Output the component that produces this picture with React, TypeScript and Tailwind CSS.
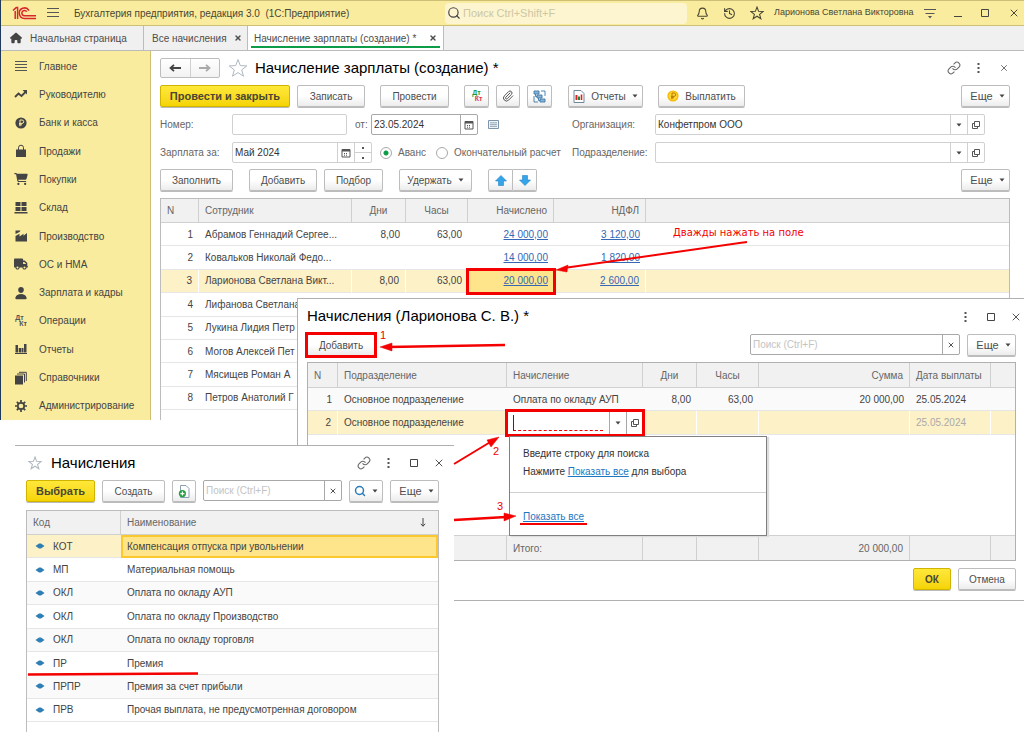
import { useState, type ReactNode } from "react";
import { Bell, History, Link, Paperclip, Search, X } from "lucide-react";
import { FaCartShopping, FaHouse, FaTruck } from "react-icons/fa6";
import { IoPerson } from "react-icons/io5";
import clsx from "clsx";

type Employee = {
    name: string;
    days?: string;
    hours?: string;
    accrued?: string;
    tax?: string;
};

const employees: Employee[] = [
    { name: "Абрамов Геннадий Сергее...", days: "8,00", hours: "63,00", accrued: "24 000,00", tax: "3 120,00" },
    { name: "Ковальков Николай Федо...", accrued: "14 000,00", tax: "1 820,00" },
    { name: "Ларионова Светлана Викт...", days: "8,00", hours: "63,00", accrued: "20 000,00", tax: "2 600,00" },
    { name: "Лифанова Светлана" },
    { name: "Лукина Лидия Петр" },
    { name: "Могов Алексей Пет" },
    { name: "Мясищев Роман А" },
    { name: "Петров Анатолий Г" },
];

const kinds = [
    ["КОТ", "Компенсация отпуска при увольнении"],
    ["МП", "Материальная помощь"],
    ["ОКЛ", "Оплата по окладу АУП"],
    ["ОКЛ", "Оплата по окладу Производство"],
    ["ОКЛ", "Оплата по окладу торговля"],
    ["ПР", "Премия"],
    ["ПРПР", "Премия за счет прибыли"],
    ["ПРВ", "Прочая выплата, не предусмотренная договором"],
];

const Logo = () => (
    <svg viewBox="0 0 24 14" className="h-3.5 w-6" fill="none" stroke="#d9272e" strokeWidth="1.5">
        <path d="M1 4.5 L4.2 1.6 H5.6 V13 M3.2 13 V5" />
        <path d="M17 4.6 A5.2 5.2 0 1 0 12.6 12.4 H24" />
        <path d="M14.8 5.6 A2.7 2.7 0 1 0 12.6 9.8 H24" />
    </svg>
);

const Star = ({ className }: { className?: string }) => (
    <svg viewBox="0 0 20 20" className={className} fill="none" stroke="currentColor">
        <path d="M10 1.5L12.3 7.6L18.8 7.9L13.7 11.9L15.5 18.2L10 14.6L4.5 18.2L6.3 11.9L1.2 7.9L7.7 7.6Z" />
    </svg>
);

const Lines = () => (
    <svg viewBox="0 0 12 12" className="h-3 w-3" stroke="#555" strokeWidth="1">
        <path d="M0 1.5H12M0 4.5H12M0 7.5H12M0 10.5H12" />
    </svg>
);

const Trend = () => (
    <svg viewBox="0 0 14 10" className="h-2.5 w-3.5" fill="none" stroke="#444" strokeWidth="1.8">
        <path d="M1 8 L4.5 4.5 L7.5 7 L12 2.5" />
        <path d="M8.5 1H13V5.5Z" fill="#444" stroke="none" />
    </svg>
);

const Rouble = ({ gold }: { gold?: boolean }) => (
    <svg viewBox="0 0 12 12" className="h-3 w-3">
        <circle cx="6" cy="6" r="5.6" fill={gold ? "#f5b800" : "#444"} />
        <circle cx="6" cy="6" r="4.4" fill={gold ? "#ffd633" : "#444"} />
        <path d="M5 9.2V3H7a1.6 1.6 0 0 1 0 3.4H4M4 7.8H7" fill="none" stroke={gold ? "#b87800" : "#f9ec9f"} strokeWidth="1" />
    </svg>
);

const Bag = () => (
    <svg viewBox="0 0 12 13" className="h-3.5 w-3">
        <path d="M1 5H11V12.5H1Z" fill="#444" />
        <path d="M3.5 6V3.2a2.5 2.5 0 0 1 5 0V6" fill="none" stroke="#444" strokeWidth="1" />
    </svg>
);

const Stock = () => (
    <svg viewBox="0 0 13 12" className="h-3 w-3.5" fill="#444">
        <path d="M1 0H6V4H1ZM7 0H12V4H7ZM1 5H6V9H1ZM7 5H12V9H7ZM0 10H13V11.5H0Z" />
    </svg>
);

const Factory = () => (
    <svg viewBox="0 0 13 12" className="h-3 w-3.5" fill="#444">
        <path d="M1 11.5V6L5 3.8V6.4L9 3.8V5.8L12.5 3V11.5Z" />
        <path d="M1 0.5H6L5 2L1 4Z" />
    </svg>
);

const DtKt = ({ colored }: { colored?: boolean }) => (
    <span className="flex flex-col text-[7px] leading-[6px] font-bold">
        <span className={colored ? "text-[#159a48]" : "text-[#555]"}>Дт</span>
        <span className={clsx("pl-1", colored ? "text-[#e0393e]" : "text-[#555]")}>Кт</span>
    </span>
);

const Bars = () => (
    <svg viewBox="0 0 12 10" className="h-2.5 w-3" fill="#444">
        <path d="M0.5 1H3V8.5H0.5ZM3.7 4H6V8.5H3.7ZM6.5 4H8.5V8.5H6.5ZM9 0H11.5V8.5H9ZM0 9H12V10H0Z" />
    </svg>
);

const Books = () => (
    <svg viewBox="0 0 12 13" className="h-3.5 w-3">
        <path d="M0 4H8V13H0Z" fill="#444" />
        <path d="M2 2.5H9.5V11M4 0.8H11.3V9.5" fill="none" stroke="#444" strokeWidth="1" />
    </svg>
);

const Gear = () => (
    <svg viewBox="0 0 12 12" className="h-3 w-3" fill="none" stroke="#444">
        <circle cx="6" cy="6" r="3.2" strokeWidth="1.7" />
        <path d="M6 0V2.4M6 9.6V12M0 6H2.4M9.6 6H12M1.8 1.8L3.4 3.4M8.6 8.6L10.2 10.2M10.2 1.8L8.6 3.4M3.4 8.6L1.8 10.2" strokeWidth="1.7" />
    </svg>
);

const Caret = () => (
    <svg viewBox="0 0 6 4" className="h-1 w-1.5" fill="#444">
        <path d="M0.5 0.5H5.5L3 3.5Z" />
    </svg>
);

const Calendar = () => (
    <svg viewBox="0 0 10 10" className="h-2.5 w-2.5" fill="none" stroke="#555">
        <path d="M1 1.5H9V9H1Z" />
        <path d="M1 2.5H9" strokeWidth="2" />
        <path d="M3 5.5H7M3 7.2H7" strokeDasharray="1 1" />
    </svg>
);

const Popout = () => (
    <svg viewBox="0 0 10 10" className="h-2.5 w-2.5" fill="none" stroke="#555">
        <path d="M3.5 1.5H8.5V6.5H3.5Z" />
        <path d="M3.5 3.5H1.5V8.5H6.5V6.5" />
    </svg>
);

const Dots = () => (
    <svg viewBox="0 0 3 10" className="h-2.5 w-[3px]" fill="#555">
        <path d="M0.5 0H2.5V2H0.5ZM0.5 4H2.5V6H0.5ZM0.5 8H2.5V10H0.5Z" />
    </svg>
);

const Square = () => (
    <svg viewBox="0 0 8 8" className="h-2 w-2" fill="none" stroke="#444">
        <path d="M0.5 0.5H7.5V7.5H0.5Z" />
    </svg>
);

const Back = ({ flip, color }: { flip?: boolean; color: string }) => (
    <svg viewBox="0 0 12 8" className={clsx("h-2 w-3", flip && "rotate-180")} fill="none" stroke={color} strokeWidth="1.8">
        <path d="M1.5 4H12M5 0.8L1.5 4L5 7.2" />
    </svg>
);

const BlueArrow = ({ down }: { down?: boolean }) => (
    <svg viewBox="0 0 12 11" className={clsx("h-[11px] w-3", down && "rotate-180")}>
        <path d="M6 0.5L11.5 6H8.5V10.5H3.5V6H0.5Z" fill="#35a4e8" stroke="#2484c4" strokeWidth="0.6" />
    </svg>
);

const Structure = () => (
    <svg viewBox="0 0 13 13" className="h-[13px] w-[13px]" fill="#8cb4d6" stroke="#3b78ac" strokeWidth="0.9">
        <path d="M1 1H6V4H1ZM4 5H9V8H4ZM7 9H12V12H7Z" />
        <path d="M8 1H12V6M1 6V12H5M2.5 4V6.5H4M5.5 8V10.5H7" fill="none" />
    </svg>
);

const Report = () => (
    <svg viewBox="0 0 12 13" className="h-[13px] w-3" fill="none">
        <path d="M1 0.5H8L11 3.5V12.5H1Z" fill="#fff" stroke="#71879b" />
        <path d="M3.5 10V5" stroke="#e02020" strokeWidth="2" />
        <path d="M6 10V6.5" stroke="#168a3c" strokeWidth="2" />
        <path d="M8.5 10V4.5" stroke="#e02020" strokeWidth="1.6" />
    </svg>
);

const CopyAdd = () => (
    <svg viewBox="0 0 12 13" className="h-[13px] w-3" fill="none">
        <path d="M2.5 0.5H8L11 3.5V12.5H2.5Z" fill="#fff" stroke="#8ba0b3" />
        <circle cx="4.4" cy="8.6" r="3.6" fill="#27a243" />
        <path d="M4.4 6.6V10.6M2.4 8.6H6.4" stroke="#fff" strokeWidth="1.2" />
    </svg>
);

const Card = () => (
    <svg viewBox="0 0 11 9" className="h-[9px] w-[11px]" fill="none" stroke="#7f95aa">
        <path d="M0.5 0.5H10.5V8.5H0.5Z" fill="#eef3f8" />
        <path d="M2 2.8H9M2 4.6H9M2 6.4H9" strokeWidth="0.8" />
    </svg>
);

const Diamond = () => (
    <svg viewBox="0 0 10 6" className="h-1.5 w-2.5" fill="#2f7fb5">
        <path d="M0.5 3L4 0.6H6L9.5 3L6 5.4H4Z" />
    </svg>
);

type ButtonProps = { children: ReactNode; className?: string; yellow?: boolean; label?: string };

const Button = ({ children, className, yellow, label }: ButtonProps) => (
    <button
        type="button"
        aria-label={label}
        className={clsx(
            "flex h-[22px] shrink-0 items-center justify-center gap-1.5 rounded-xs border shadow-[0_1px_0_#bbb]",
            yellow
                ? "border-[#d1b400] bg-linear-to-b from-[#ffe838] to-[#f5d400] font-bold text-[#4a4632]"
                : "border-[#bdbdbd] bg-linear-to-b from-white from-50% to-[#ececec] text-[#4d4d4d]",
            className,
        )}
    >
        {children}
    </button>
);

const More = () => (
    <Button className="w-[49px] pl-1 text-[11px]">
        Еще <Caret />
    </Button>
);

const WindowButton = ({ children, label }: { children: ReactNode; label: string }) => (
    <button type="button" aria-label={label} className="flex h-5 w-[25px] items-center justify-center text-[#555]">
        {children}
    </button>
);

type FieldProps = {
    id: string;
    value?: string;
    placeholder?: string;
    className?: string;
    children?: ReactNode;
    dark?: boolean;
};

const Field = ({ id, value = "", placeholder, className, children, dark }: FieldProps) => {
    const [text, setText] = useState(value);
    return (
        <div className={clsx("flex h-[21px] min-w-0 rounded-xs border bg-white", dark ? "border-[#a8a8a8]" : "border-[#d0d0d0]", className)}>
            <input
                id={id}
                aria-label={placeholder}
                placeholder={placeholder}
                value={text}
                onChange={(e) => setText(e.target.value)}
                className="min-w-0 flex-1 px-0.5 text-[#333] outline-none placeholder:text-[#c4c4c4]"
            />
            {children}
        </div>
    );
};

const FieldButton = ({ children, label, dark }: { children: ReactNode; label: string; dark?: boolean }) => (
    <button
        type="button"
        aria-label={label}
        className={clsx("flex w-[17px] shrink-0 items-center justify-center border-l text-[#555]", dark ? "border-[#a8a8a8]" : "border-[#d0d0d0]")}
    >
        {children}
    </button>
);

const TopBar = () => (
    <header className="flex h-[26px] items-center border-t border-b border-[#cdbf76] bg-[#f9ec9f] pl-[11px] text-[#4a4632]">
        <Logo />
        <button type="button" aria-label="Меню" className="ml-[11px]">
            <svg viewBox="0 0 12 10" className="h-2.5 w-3" stroke="#555">
                <path d="M0 0.5H12M0 4.5H12M0 8.5H12" />
            </svg>
        </button>
        <h1 className="ml-[15px] w-[371px] whitespace-pre">Бухгалтерия предприятия, редакция 3.0  (1С:Предприятие)</h1>
        <label className="flex h-[21px] flex-1 items-center gap-0.5 rounded-sm bg-[#fdf5cf] px-0.5">
            <Search className="h-3.5 w-3.5 text-[#444]" strokeWidth={2} />
            <input placeholder="Поиск Ctrl+Shift+F" className="min-w-0 flex-1 text-[11px] outline-none placeholder:text-[#cdc7a4]" />
        </label>
        <div className="ml-[9px] flex items-center gap-3.5">
            <Bell className="h-[13px] w-[13px]" />
            <History className="h-[13px] w-[13px]" />
            <Star className="h-3.5 w-3.5 stroke-[1.5px]" />
        </div>
        <span className="ml-2.5 w-[140px] text-[9px] whitespace-nowrap">Ларионова Светлана Викторовна</span>
        <svg viewBox="0 0 12 11" className="ml-2.5 h-[11px] w-3" stroke="#555">
            <path d="M0 1.5H12M1.5 5.5H10.5" />
            <path d="M4 8H8L6 10.5Z" fill="#555" stroke="none" />
        </svg>
        <div className="ml-[18px] flex items-center gap-[19px] pr-1">
            <svg viewBox="0 0 8 8" className="h-2 w-2" stroke="#444">
                <path d="M0 7.5H8" />
            </svg>
            <Square />
            <X className="h-3 w-3" strokeWidth={2} />
        </div>
    </header>
);

const Tabs = () => (
    <div className="flex h-[25px] border-b border-[#bcbcbc] bg-[#f0f0f0] text-[#4d4d4d]">
        <a href="#home" className="flex w-[143px] items-center gap-2 border-r border-[#bcbcbc] pl-[9px]">
            <FaHouse className="h-3 w-3 text-[#444]" /> Начальная страница
        </a>
        <a href="#accruals" className="flex w-[104px] items-center justify-between border-r border-[#bcbcbc] px-[5px] pl-2">
            Все начисления <X className="h-2 w-2" strokeWidth={4} />
        </a>
        <a href="#payroll" className="flex w-[196px] border-r border-[#bcbcbc] bg-white px-[3px] pb-0.5">
            <span className="flex flex-1 items-center justify-between border-b-2 border-[#0d9c48] px-[3px] pt-1">
                Начисление зарплаты (создание) * <X className="h-2 w-2" strokeWidth={4} />
            </span>
        </a>
    </div>
);

const menu: [string, ReactNode][] = [
    ["Главное", <Lines />],
    ["Руководителю", <Trend />],
    ["Банк и касса", <Rouble />],
    ["Продажи", <Bag />],
    ["Покупки", <FaCartShopping className="h-3 w-3.5" />],
    ["Склад", <Stock />],
    ["Производство", <Factory />],
    ["ОС и НМА", <FaTruck className="h-3 w-3.5" />],
    ["Зарплата и кадры", <IoPerson className="h-3.5 w-3.5" />],
    ["Операции", <DtKt />],
    ["Отчеты", <Bars />],
    ["Справочники", <Books />],
    ["Администрирование", <Gear />],
];

const Sidebar = () => (
    <nav className="flex w-[150px] shrink-0 flex-col border-r border-[#cdbf76] bg-[#f9ec9f] pt-px text-[#444]">
        {menu.map(([title, icon]) => (
            <a key={title} href="#section" className="flex flex-1 items-center gap-2.5 pl-3">
                <span className="flex w-4 justify-center">{icon}</span>
                {title}
            </a>
        ))}
    </nav>
);

const EmployeeTable = () => {
    const th = "border-r border-b border-[#d0d0d0] font-normal text-[#666]";
    const td = "border-b border-[#e6e6e6]";
    return (
        <div className="h-[222px] overflow-hidden border border-b-0 border-[#bcbcbc]">
            <table className="h-[211px] w-full table-fixed border-separate border-spacing-0">
                <thead className="bg-[#f1f1f1]">
                    <tr className="h-6">
                        <th className={clsx(th, "w-[38px] pl-1.5 text-left")}>N</th>
                        <th className={clsx(th, "w-[153px] pl-1.5 text-left")}>Сотрудник</th>
                        <th className={clsx(th, "w-[54px]")}>Дни</th>
                        <th className={clsx(th, "w-[62px]")}>Часы</th>
                        <th className={clsx(th, "w-[86px] pr-1.5 text-right")}>Начислено</th>
                        <th className={clsx(th, "w-[92px] pr-1.5 text-right")}>НДФЛ</th>
                        <th className="border-b border-[#d0d0d0]" />
                    </tr>
                </thead>
                <tbody>
                    {employees.map((row, i) => (
                        <tr key={row.name} className={clsx(i === 2 && "bg-[#fdf1c7]")}>
                            <td className={clsx(td, "pr-1.5 text-right", i === 2 && "border-r border-r-white")}>{i + 1}</td>
                            <td className={clsx(td, "truncate pl-1.5", i === 2 && "border-r border-r-white")}>{row.name}</td>
                            <td className={clsx(td, "pr-1.5 text-right", i === 2 && "border-r border-r-white")}>{row.days}</td>
                            <td className={clsx(td, "pr-1.5 text-right")}>{row.hours}</td>
                            <td className={clsx(td, "pr-1.5 text-right", i === 2 && "bg-[#fee48b] outline-3 -outline-offset-1 outline-[#f40000]")}>
                                {row.accrued && <a href="#accrued" className="text-[#3567b5] underline">{row.accrued}</a>}
                            </td>
                            <td className={clsx(td, "pr-1.5 text-right", i === 2 && "border-r border-r-white")}>
                                {row.tax && <a href="#tax" className="text-[#3567b5] underline">{row.tax}</a>}
                            </td>
                            <td className={td} />
                        </tr>
                    ))}
                </tbody>
            </table>
        </div>
    );
};

const Radio = ({ label, checked }: { label: string; checked?: boolean }) => (
    <label className="flex items-center gap-1.5 whitespace-nowrap">
        <input
            type="radio"
            name="payment"
            defaultChecked={checked}
            className="h-3 w-3 appearance-none rounded-full border border-[#a8a8a8] bg-white checked:bg-[radial-gradient(#0d9c48_0_2px,white_3px)]"
        />
        {label}
    </label>
);

const DocumentForm = () => (
    <main className="min-w-0 flex-1 bg-white pt-[7px] pr-3.5 pl-[9px]">
        <div className="flex h-5 items-center">
            <div className="flex h-5 w-[60px] rounded-xs border border-[#bdbdbd] bg-linear-to-b from-white to-[#f2f2f2]">
                <button type="button" aria-label="Назад" className="flex flex-1 items-center justify-center border-r border-[#d0d0d0]">
                    <Back color="#444" />
                </button>
                <button type="button" aria-label="Вперед" className="flex flex-1 items-center justify-center">
                    <Back color="#aaa" flip />
                </button>
            </div>
            <Star className="ml-2 h-5 w-5 text-[#b0b8c0]" />
            <h2 className="ml-[7px] flex-1 text-[15px] text-black">Начисление зарплаты (создание) *</h2>
            <div className="-mr-1.5 flex">
                <WindowButton label="Ссылка"><Link className="h-3.5 w-3.5 text-[#666]" strokeWidth={1.8} /></WindowButton>
                <WindowButton label="Действия"><Dots /></WindowButton>
                <WindowButton label="Закрыть"><X className="h-2.5 w-2.5" /></WindowButton>
            </div>
        </div>
        <div className="mt-[7px] flex">
            <Button yellow className="w-[130px] text-[11px]">Провести и закрыть</Button>
            <Button className="ml-[7px] w-[68px]">Записать</Button>
            <Button className="ml-[15px] w-[69px]">Провести</Button>
            <Button className="ml-[15px] w-[25px]" label="Дт/Кт"><DtKt colored /></Button>
            <Button className="ml-[7px] w-6" label="Файлы"><Paperclip className="h-3 w-3 text-[#555]" /></Button>
            <Button className="ml-[7px] w-[25px]" label="Структура"><Structure /></Button>
            <Button className="ml-4 w-[75px]"><Report /> Отчеты <Caret /></Button>
            <Button className="ml-[15px] w-[87px]"><Rouble gold /> Выплатить</Button>
            <div className="flex-1" />
            <More />
        </div>
        <div className="mt-[7px] flex items-center text-[#666]">
            <div className="flex w-[412px] shrink-0 items-center">
                <label htmlFor="number" className="w-[72px]">Номер:</label>
                <Field id="number" className="w-[115px]" />
                <label htmlFor="date" className="w-[24px] pl-2">от:</label>
                <Field id="date" value="23.05.2024" dark className="w-[107px]">
                    <FieldButton label="Календарь" dark><Calendar /></FieldButton>
                </Field>
                <span className="pl-2.5"><Card /></span>
            </div>
            <label htmlFor="org" className="w-[83px] shrink-0">Организация:</label>
            <Field id="org" value="Конфетпром ООО" className="mr-[25px] flex-1">
                <FieldButton label="Выбрать"><Caret /></FieldButton>
                <FieldButton label="Открыть"><Popout /></FieldButton>
            </Field>
        </div>
        <div className="mt-[7px] flex items-center text-[#666]">
            <div className="flex w-[412px] shrink-0 items-center">
                <label htmlFor="period" className="w-[72px]">Зарплата за:</label>
                <Field id="period" value="Май 2024" className="w-[140px]">
                    <FieldButton label="Календарь"><Calendar /></FieldButton>
                    <span className="flex w-[17px] flex-col border-l border-[#d0d0d0]">
                        <button type="button" aria-label="Больше" className="flex flex-1 items-center justify-center border-b border-[#d0d0d0]">
                            <span className="h-0.5 w-0.5 bg-[#555]" />
                        </button>
                        <button type="button" aria-label="Меньше" className="flex flex-1 items-center justify-center">
                            <span className="h-0.5 w-0.5 bg-[#555]" />
                        </button>
                    </span>
                </Field>
                <div className="flex gap-2.5 pl-2">
                    <Radio label="Аванс" checked />
                    <Radio label="Окончательный расчет" />
                </div>
            </div>
            <label htmlFor="dept" className="w-[83px] shrink-0">Подразделение:</label>
            <Field id="dept" className="mr-[25px] flex-1">
                <FieldButton label="Выбрать"><Caret /></FieldButton>
                <FieldButton label="Открыть"><Popout /></FieldButton>
            </Field>
        </div>
        <div className="mt-1.5 mb-[7px] flex">
            <Button className="w-[73px]">Заполнить</Button>
            <Button className="ml-4 w-[68px]">Добавить</Button>
            <Button className="ml-[7px] w-[59px]">Подбор</Button>
            <Button className="ml-4 w-[73px]">Удержать <Caret /></Button>
            <Button className="ml-4 w-[25px] rounded-r-none" label="Вверх"><BlueArrow /></Button>
            <Button className="w-6 rounded-l-none border-l-0" label="Вниз"><BlueArrow down /></Button>
            <div className="flex-1" />
            <More />
        </div>
        <EmployeeTable />
    </main>
);

const ShowAllPopup = () => (
    <div className="absolute top-[137px] left-[211px] w-[258px] border border-[#808080] bg-white text-[#333] shadow-[2px_1px_1px_#ddd]">
        <div className="border-b border-[#d0d0d0] px-[13px] pt-2 pb-[11px] leading-[18px]">
            <p>Введите строку для поиска</p>
            <p>
                Нажмите <a href="#all" className="text-[#1c77c3] underline">Показать все</a> для выбора
            </p>
        </div>
        <div className="h-[42px] px-2.5 pt-4">
            <a href="#all" className="inline-block h-4 border-b-2 border-[#f40000] px-[3px] text-[#1c77c3] underline">Показать все</a>
        </div>
    </div>
);

const AccrualDialog = () => {
    const th = "border-r border-b border-[#d0d0d0] font-normal text-[#666]";
    const td = "border-b border-[#e6e6e6]";
    const sel = "border-r border-b border-r-white border-b-[#e6e6e6]";
    const ft = "border-t border-r border-[#d0d0d0] text-[#666]";
    return (
        <section className="absolute top-[298px] right-0 left-[297px] border-t border-b border-l border-[#b0b0b0] bg-white pr-2 pl-[9px]">
            <div className="flex h-[35px] items-center">
                <h2 className="flex-1 text-[15px] text-black">Начисления (Ларионова С. В.) *</h2>
                <div className="-mr-3 flex">
                    <WindowButton label="Действия"><Dots /></WindowButton>
                    <WindowButton label="Развернуть"><Square /></WindowButton>
                    <WindowButton label="Закрыть"><X className="h-3 w-3" /></WindowButton>
                </div>
            </div>
            <div className="flex">
                <div className="outline-3 -outline-offset-1 outline-[#f40000]">
                    <Button className="w-[68px]">Добавить</Button>
                </div>
                <div className="flex-1" />
                <Field id="dialog-search" placeholder="Поиск (Ctrl+F)" dark className="w-[210px]">
                    <FieldButton label="Очистить" dark><X className="h-2 w-2" strokeWidth={3} /></FieldButton>
                </Field>
                <div className="w-[7px]" />
                <More />
            </div>
            <table className="mt-[6px] h-[199px] w-full table-fixed border-separate border-spacing-0 border border-[#b0b0b0]">
                <thead className="bg-[#f1f1f1]">
                    <tr className="h-[25px]">
                        <th className={clsx(th, "w-[30px] pl-1.5 text-left")}>N</th>
                        <th className={clsx(th, "w-[169px] pl-1.5 text-left")}>Подразделение</th>
                        <th className={clsx(th, "w-[136px] pl-1.5 text-left")}>Начисление</th>
                        <th className={clsx(th, "w-[54px]")}>Дни</th>
                        <th className={clsx(th, "w-[62px]")}>Часы</th>
                        <th className={clsx(th, "pr-1.5 text-right")}>Сумма</th>
                        <th className={clsx(th, "w-[81px] pl-1.5 text-left whitespace-nowrap")}>Дата выплаты</th>
                        <th className="w-6 border-b border-[#d0d0d0]" />
                    </tr>
                </thead>
                <tbody>
                    <tr className="h-[23px] bg-[#fafafa]">
                        <td className={clsx(td, "pr-1.5 text-right")}>1</td>
                        <td className={clsx(td, "pl-1.5")}>Основное подразделение</td>
                        <td className={clsx(td, "pl-1.5")}>Оплата по окладу АУП</td>
                        <td className={clsx(td, "pr-1.5 text-right")}>8,00</td>
                        <td className={clsx(td, "pr-1.5 text-right")}>63,00</td>
                        <td className={clsx(td, "pr-1.5 text-right")}>20 000,00</td>
                        <td className={clsx(td, "pl-1.5")}>25.05.2024</td>
                        <td className={td} />
                    </tr>
                    <tr className="h-6 bg-[#fdf1c7]">
                        <td className={clsx(sel, "pr-1.5 text-right")}>2</td>
                        <td className={clsx(sel, "pl-1.5")}>Основное подразделение</td>
                        <td className="bg-white p-0 outline-3 -outline-offset-1 outline-[#f40000]">
                            <div className="flex h-[23px]">
                                <div className="flex flex-1 items-center px-1.5">
                                    <input
                                        aria-label="Начисление"
                                        className="h-4 w-full border-b border-l border-dashed border-b-[#f40000] border-l-[#333] [border-left-style:solid] outline-none"
                                    />
                                </div>
                                <FieldButton label="Список" dark><Caret /></FieldButton>
                                <FieldButton label="Открыть" dark><Popout /></FieldButton>
                            </div>
                        </td>
                        <td className={sel} />
                        <td className={sel} />
                        <td className={sel} />
                        <td className={clsx(sel, "pl-1.5 text-[#aaa]")}>25.05.2024</td>
                        <td className={td} />
                    </tr>
                    <tr>
                        <td colSpan={8} />
                    </tr>
                </tbody>
                <tfoot className="bg-[#f1f1f1]">
                    <tr className="h-[25px]">
                        <td className={ft} />
                        <td className={ft} />
                        <td className={clsx(ft, "pl-1.5")}>Итого:</td>
                        <td className={ft} />
                        <td className={ft} />
                        <td className={clsx(ft, "pr-1.5 text-right")}>20 000,00</td>
                        <td className={ft} />
                        <td className="border-t border-[#d0d0d0]" />
                    </tr>
                </tfoot>
            </table>
            <ShowAllPopup />
            <div className="flex justify-end gap-[7px] pt-[7px] pb-2.5">
                <Button yellow className="w-[38px]">ОК</Button>
                <Button className="w-[58px]">Отмена</Button>
            </div>
        </section>
    );
};

const AccrualPicker = () => (
    <section className="absolute top-[445px] bottom-0 left-[15px] w-[439px] overflow-hidden border-t border-[#b0b0b0] bg-white pr-[15px] pl-[11px]">
        <div className="flex h-[34px] items-center">
            <Star className="ml-0.5 h-3.5 w-3.5 stroke-[1.5px] text-[#b0b8c0]" />
            <h2 className="ml-[9px] flex-1 text-[15px] text-black">Начисления</h2>
            <div className="-mr-3 flex">
                <WindowButton label="Ссылка"><Link className="h-3.5 w-3.5 text-[#666]" strokeWidth={1.8} /></WindowButton>
                <WindowButton label="Действия"><Dots /></WindowButton>
                <WindowButton label="Развернуть"><Square /></WindowButton>
                <WindowButton label="Закрыть"><X className="h-3 w-3" /></WindowButton>
            </div>
        </div>
        <div className="flex">
            <Button yellow className="w-[69px] text-[11px]">Выбрать</Button>
            <Button className="ml-[7px] w-[63px]">Создать</Button>
            <Button className="ml-[7px] w-6" label="Скопировать"><CopyAdd /></Button>
            <Field id="picker-search" placeholder="Поиск (Ctrl+F)" dark className="ml-[7px] flex-1">
                <FieldButton label="Очистить" dark><X className="h-2 w-2" strokeWidth={3} /></FieldButton>
            </Field>
            <Button className="mx-[7px] w-[34px]" label="Найти">
                <Search className="h-3 w-3 text-[#2b7cb8]" strokeWidth={3} /> <Caret />
            </Button>
            <More />
        </div>
        <div className="mt-2 h-[230px] border border-[#bcbcbc]">
            <table className="h-[211px] w-full table-fixed border-separate border-spacing-0">
                <thead className="bg-[#f1f1f1] text-[#666]">
                    <tr className="h-6">
                        <th className="w-[94px] border-r border-b border-[#d0d0d0] pl-1.5 text-left font-normal">Код</th>
                        <th className="border-b border-[#d0d0d0] pr-3 pl-1.5 text-left font-normal">
                            <span className="flex items-center justify-between">
                                Наименование
                                <svg viewBox="0 0 6 9" className="h-[9px] w-1.5" fill="none" stroke="#444">
                                    <path d="M3 0V8.2M0.8 5.8L3 8.2L5.2 5.8" />
                                </svg>
                            </span>
                        </th>
                    </tr>
                </thead>
                <tbody>
                    {kinds.map(([code, name], i) => (
                        <tr key={name} className={clsx(i === 0 ? "bg-[#fdf1c7]" : i % 2 === 0 && "bg-[#fafafa]")}>
                            <td className="border-b border-[#e6e6e6] pl-2">
                                <span className="flex items-center gap-2"><Diamond /> {code}</span>
                            </td>
                            <td
                                className={clsx(
                                    "border-b border-[#e6e6e6] pl-1.5",
                                    i === 0 && "bg-[#fee48b] outline-2 -outline-offset-2 outline-[#fbc92d]",
                                )}
                            >
                                {name}
                            </td>
                        </tr>
                    ))}
                </tbody>
            </table>
        </div>
    </section>
);

// Red tutorial marks drawn above the windows
const Marks = () => (
    <div className="pointer-events-none absolute inset-0 text-[#f40000]">
        <svg viewBox="0 0 1024 732" className="h-[732px] w-[1024px]" fill="#f40000" stroke="#f40000" strokeWidth="2">
            <path d="M747 242L564 268" />
            <path d="M556 270L568 265L567 272Z" strokeWidth="0.5" />
            <path d="M505 345L388 347" strokeWidth="2.5" />
            <path d="M380 347L392 343V351Z" strokeWidth="0.5" />
            <path d="M454 464L492 441" />
            <path d="M499 437L491 447L487 440Z" strokeWidth="0.5" />
            <path d="M454 520L506 517" strokeWidth="2.5" />
            <path d="M516 516L504 513V521Z" strokeWidth="0.5" />
            <path d="M28 674.5L198 673.5" strokeWidth="2.5" />
        </svg>
        <span className="absolute top-[226px] left-[673px] font-['DejaVu_Sans'] text-[10px] leading-[14px]">Дважды нажать на поле</span>
        <span className="absolute top-[328px] left-[380px] text-[11px] leading-[14px]">1</span>
        <span className="absolute top-[444px] left-[493px] text-[11px] leading-[14px]">2</span>
        <span className="absolute top-[499px] left-[497px] text-[11px] leading-[14px]">3</span>
    </div>
);

const App = () => {
    return (
        <div className="relative min-h-screen overflow-hidden bg-white font-['Liberation_Sans',Arial,sans-serif] text-[10px] text-[#444]">
            <div className="border-l border-[#1f3a5a]">
                <TopBar />
                <Tabs />
                <div className="flex">
                    <Sidebar />
                    <DocumentForm />
                </div>
            </div>
            <AccrualDialog />
            <AccrualPicker />
            <Marks />
        </div>
    );
};

export default App;
